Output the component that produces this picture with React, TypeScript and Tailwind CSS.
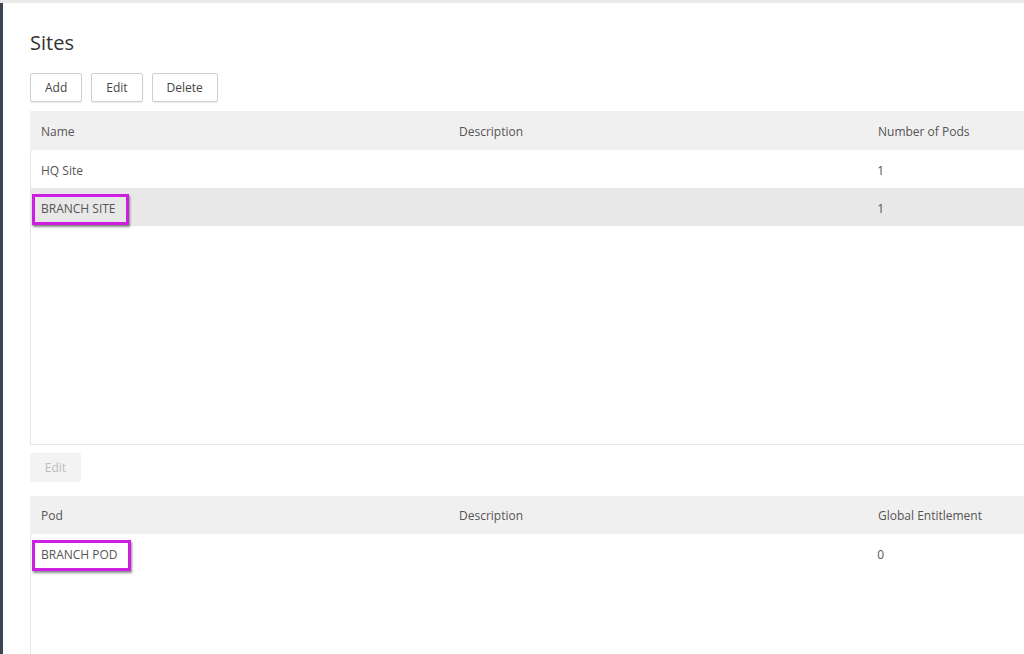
import React from "react";

const font = { fontFamily: '"Open Sans", "Noto Sans", sans-serif' };

function Btn({ label, disabled }: { label: string; disabled?: boolean }) {
  if (disabled) {
    return (
      <div className="h-[29px] w-[51px] flex items-center justify-center bg-[#f3f3f3] text-[#bdbdbd] text-[12px] rounded-[2px]">
        {label}
      </div>
    );
  }
  return (
    <button className="h-[29px] px-[14px] flex items-center justify-center bg-white border border-[#cfcfcf] rounded-[2px] text-[12px] text-[#444] shadow-[0_1px_1px_rgba(0,0,0,0.08)]">
      {label}
    </button>
  );
}

function Highlight({ children }: { children: React.ReactNode }) {
  return (
    <span className="relative inline-block">
      <span className="absolute left-[-9px] right-[-13px] top-[-6px] bottom-[-7px] border-[3px] border-[#cc1fe2] shadow-[1px_2px_2px_rgba(0,0,0,0.45)]" />
      {children}
    </span>
  );
}

export default function App() {
  return (
    <div className="w-[1024px] h-[654px] overflow-hidden bg-white flex flex-col" style={font}>
      <div className="h-[3px] bg-[#e9e9e9] shrink-0" />
      <div className="flex flex-1 min-h-0">
        <div className="w-[3px] bg-[#3b4550] shrink-0" />
        <div className="flex-1 min-w-0 overflow-hidden pl-[27px]">
          <h1 className="text-[20px] leading-[28px] text-[#333] mt-[26px] font-normal">Sites</h1>
          <div className="flex gap-[9px] mt-[16px]">
            <Btn label="Add" />
            <Btn label="Edit" />
            <Btn label="Delete" />
          </div>
          <div className="w-[1257px] mt-[9px]">
            <div className="grid grid-cols-3 h-[39px] pt-[2px] bg-[#f0f0f0] items-center text-[12px] text-[#555]">
              <div className="pl-[11px]">Name</div>
              <div className="pl-[10px]">Description</div>
              <div className="pl-[10px]">Number of Pods</div>
            </div>
            <div className="h-[295px] border-l border-b border-[#e6e6e6] text-[12px] text-[#555]">
              <div className="grid grid-cols-3 h-[38px] pt-[3px] items-center">
                <div className="pl-[10px]">HQ Site</div>
                <div className="pl-[10px]"></div>
                <div className="pl-[9px]">1</div>
              </div>
              <div className="grid grid-cols-3 h-[38px] pt-[3px] items-center bg-[#e8e8e8]">
                <div className="pl-[10px]"><Highlight>BRANCH SITE</Highlight></div>
                <div className="pl-[10px]"></div>
                <div className="pl-[9px]">1</div>
              </div>
            </div>
          </div>
          <div className="mt-[8px]">
            <Btn label="Edit" disabled />
          </div>
          <div className="w-[1257px] mt-[14px]">
            <div className="grid grid-cols-3 h-[38px] pt-[2px] bg-[#f0f0f0] items-center text-[12px] text-[#555]">
              <div className="pl-[11px]">Pod</div>
              <div className="pl-[10px]">Description</div>
              <div className="pl-[10px]">Global Entitlement</div>
            </div>
            <div className="h-[200px] border-l border-[#e6e6e6] text-[12px] text-[#555]">
              <div className="grid grid-cols-3 h-[38px] pt-[3px] items-center">
                <div className="pl-[10px]"><Highlight>BRANCH POD</Highlight></div>
                <div className="pl-[10px]"></div>
                <div className="pl-[9px]">0</div>
              </div>
            </div>
          </div>
        </div>
      </div>
    </div>
  );
}
